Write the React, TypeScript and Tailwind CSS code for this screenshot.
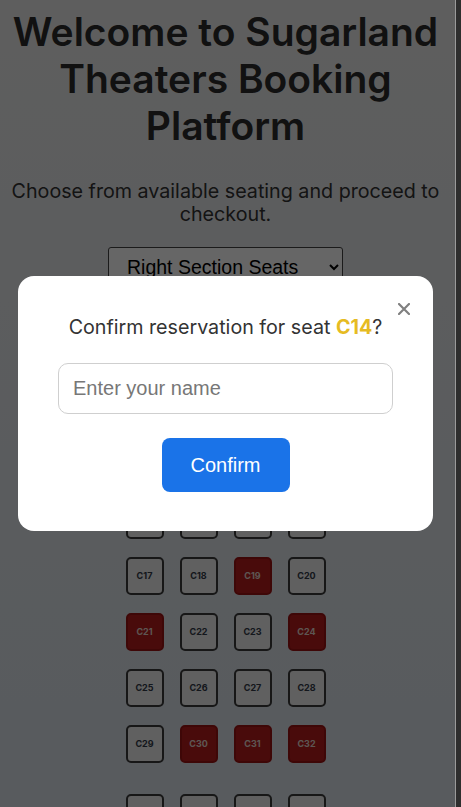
import { useState } from "react";

const reserved = new Set(["C19", "C21", "C24", "C30", "C31", "C32", "C6", "C11"]);

const topSeats = Array.from({ length: 32 }, (_, i) => `C${i + 1}`);
const bottomSeats = Array.from({ length: 8 }, (_, i) => `C${i + 33}`);

function Seat({ id }: { id: string }) {
  const taken = reserved.has(id);
  return (
    <button
      className={
        taken
          ? "w-[38px] h-[38px] rounded-[5px] border-2 border-[#9b1212] bg-[#b71c1c] text-[9px] font-bold text-[#e8d8d0] flex items-center justify-center"
          : "w-[38px] h-[38px] rounded-[5px] border-2 border-[#3a3a3a] bg-[#efefef] text-[9px] font-bold text-[#333a48] flex items-center justify-center"
      }
    >
      {id}
    </button>
  );
}

export default function App() {
  const [name, setName] = useState("");

  return (
    <div className="h-[807px] overflow-hidden flex bg-gradient-to-b from-[#ebebeb] to-[#dbe3ec] font-['Inter',sans-serif]">
      <main className="w-[455px] shrink-0">
        <div className="w-[451px] flex flex-col items-center text-center pt-[8px]">
          <h1 className="text-[39px] leading-[47px] font-semibold text-[#2b2b2b]">
            Welcome to Sugarland Theaters Booking Platform
          </h1>
          <p className="mt-[31px] text-[19.7px] leading-[23px] text-[#333]">
            Choose from available seating and proceed to checkout.
          </p>
          <select
            defaultValue="right"
            className="mt-[21px] w-[235px] h-[40px] pl-[14px] pr-2 border border-[#444] rounded-[3px] bg-white text-[19.5px] text-black font-['Liberation_Sans',Arial,sans-serif]"
          >
            <option value="left">Left Section Seats</option>
            <option value="center">Center Section Seats</option>
            <option value="right">Right Section Seats</option>
          </select>

          <div className="mt-[46px] grid grid-cols-4 gap-x-[16px] gap-y-[18px]">
            {topSeats.map((s) => (
              <Seat key={s} id={s} />
            ))}
          </div>
          <div className="mt-[31px] grid grid-cols-4 gap-x-[16px] gap-y-[18px]">
            {bottomSeats.map((s) => (
              <Seat key={s} id={s} />
            ))}
          </div>
        </div>
      </main>

      {/* scrollbar strip */}
      <div className="w-[6px] shrink-0 border-l border-[#9a9a9a] bg-[#2e2e2e]" />

      <div className="fixed top-0 left-0 h-[807px] w-[455px] bg-black/60 flex items-center">
        <div className="relative ml-[18px] w-[415px] bg-white rounded-[16px] px-10 pt-[39px] pb-[39px] flex flex-col items-center">
          <button className="absolute top-[27px] right-[23px] text-[#808080]" aria-label="Close">
            <svg width="12" height="12" viewBox="0 0 12 12">
              <path d="M1 1L11 11M11 1L1 11" stroke="currentColor" strokeWidth="2.2" strokeLinecap="round" />
            </svg>
          </button>
          <p className="text-[19.7px] leading-[24px] text-[#333]">
            Confirm reservation for seat <span className="font-bold text-[#e6bb22]">C14</span>?
          </p>
          <input
            value={name}
            onChange={(e) => setName(e.target.value)}
            placeholder="Enter your name"
            className="mt-[24px] w-[335px] h-[51px] px-[14px] border border-[#cfcfcf] rounded-[10px] text-[20px] text-[#222] placeholder:text-[#777] font-['Liberation_Sans',Arial,sans-serif] outline-none"
          />
          <button className="mt-[24px] w-[128px] h-[54px] rounded-[8px] bg-[#1a73e8] text-white text-[20px] font-['Liberation_Sans',Arial,sans-serif]">
            Confirm
          </button>
        </div>
      </div>
    </div>
  );
}
